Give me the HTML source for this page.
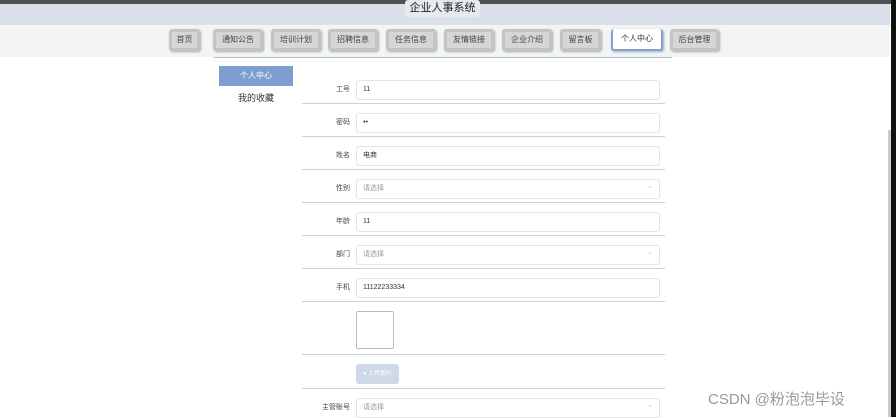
<!DOCTYPE html>
<html><head><meta charset="utf-8"><style>
*{margin:0;padding:0;box-sizing:border-box}
body{width:896px;height:417px;overflow:hidden;background:#fff;font-family:"Liberation Sans","Noto Sans CJK SC",sans-serif;position:relative}
.a{position:absolute}
.nav{top:25px;left:0;width:890px;height:32px;background:#f3f4f4}
.btn{position:absolute;top:29px;height:22px;background:#d6d6d6;border:3px solid #c4c4c4;border-radius:3px;font-size:8px;color:#444;text-align:center;line-height:16px;box-shadow:1px 1px 2px #aaa}
.btn.on{background:#fff;border:2px solid #7fa3d6;border-top:none;color:#333}
.lab{position:absolute;left:300px;width:50px;text-align:right;font-size:7px;color:#444}
.in{position:absolute;left:356px;width:304px;height:20px;border:1px solid #e2e4e8;border-radius:3px;font-size:7px;color:#333;padding-left:6px;line-height:18px}
.in.s{color:#999}
.in.s:after{content:"⌄";position:absolute;right:6px;top:-2px;color:#bbb}
.ln{position:absolute;left:302px;width:363px;height:1px;background:#c9d2df}
</style></head><body>
<div class="a" style="top:0;left:0;width:896px;height:4px;background:#505050"></div>
<div class="a" style="top:4px;left:0;width:890px;height:21px;background:#d9e0ea"></div>
<div class="a" style="top:0;left:405px;width:75px;height:17px;background:#e6e9ee;border-radius:3px;font-size:11px;color:#222;text-align:center;line-height:16px">企业人事系统</div>
<div class="a nav"></div>
<div class="btn" style="left:169px;width:31px">首页</div>
<div class="btn" style="left:213px;width:50px">通知公告</div>
<div class="btn" style="left:271px;width:50px">培训计划</div>
<div class="btn" style="left:328px;width:50px">招聘信息</div>
<div class="btn" style="left:386px;width:50px">任务信息</div>
<div class="btn" style="left:444px;width:50px">友情链接</div>
<div class="btn" style="left:502px;width:50px">企业介绍</div>
<div class="btn" style="left:560px;width:41px">留言板</div>
<div class="btn on" style="left:611px;width:52px;line-height:20px">个人中心</div>
<div class="btn" style="left:670px;width:49px">后台管理</div>
<div class="a" style="top:57px;left:214px;width:458px;height:1px;background:#a8c0dc"></div>
<div class="a" style="top:66px;left:219px;width:74px;height:20px;background:#7c9fcf;color:#fff;font-size:8px;text-align:center;line-height:20px">个人中心</div>
<div class="a" style="top:91px;left:219px;width:74px;font-size:9px;color:#333;text-align:center">我的收藏</div>

<div class="lab" style="top:84px">工号</div><div class="in" style="top:80px">11</div><div class="ln" style="top:103px"></div>
<div class="lab" style="top:117px">密码</div><div class="in" style="top:113px">••</div><div class="ln" style="top:136px"></div>
<div class="lab" style="top:150px">姓名</div><div class="in" style="top:146px">电商</div><div class="ln" style="top:169px"></div>
<div class="lab" style="top:183px">性别</div><div class="in s" style="top:179px">请选择</div><div class="ln" style="top:202px"></div>
<div class="lab" style="top:216px">年龄</div><div class="in" style="top:212px">11</div><div class="ln" style="top:235px"></div>
<div class="lab" style="top:249px">部门</div><div class="in s" style="top:245px">请选择</div><div class="ln" style="top:268px"></div>
<div class="lab" style="top:282px">手机</div><div class="in" style="top:278px">11122233334</div><div class="ln" style="top:301px"></div>
<div class="a" style="top:311px;left:356px;width:38px;height:38px;border:1px solid #bbb;border-radius:2px"></div>
<div class="ln" style="top:354px"></div>
<div class="a" style="top:364px;left:356px;width:43px;height:20px;background:#cfd8e6;border-radius:3px;color:#fff;font-size:6px;line-height:20px;text-align:center">● 上传图片</div>
<div class="ln" style="top:388px"></div>
<div class="lab" style="top:402px">主管账号</div><div class="in s" style="top:398px">请选择</div>
<div class="a" style="top:388px;left:708px;font-size:15px;color:#999">CSDN @粉泡泡毕设</div>
<div class="a" style="top:130px;left:888px;width:3px;height:287px;background:#ccc"></div>
<div class="a" style="top:0;left:891px;width:5px;height:417px;background:#111"></div>
</body></html>
